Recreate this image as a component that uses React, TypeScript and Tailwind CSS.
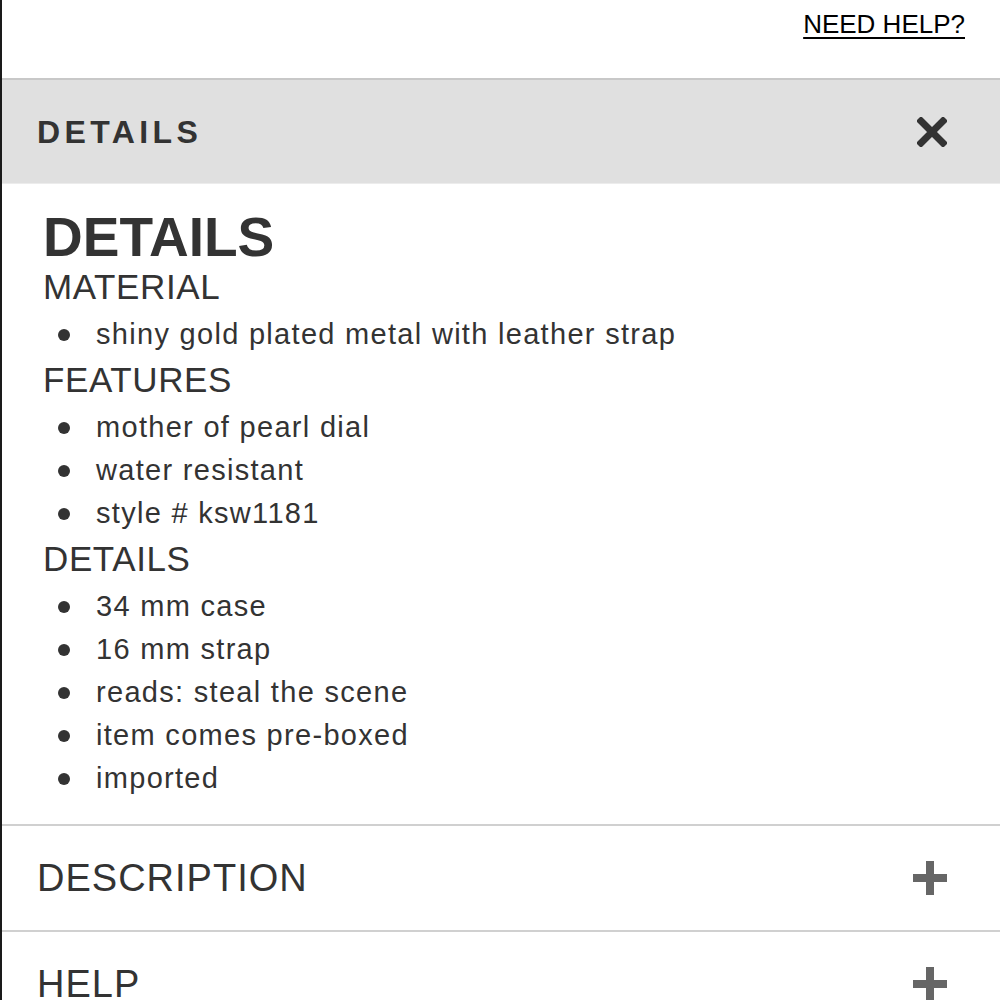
import React from 'react'

const sections = [
  { title: 'MATERIAL', items: ['shiny gold plated metal with leather strap'] },
  { title: 'FEATURES', items: ['mother of pearl dial', 'water resistant', 'style # ksw1181'] },
  {
    title: 'DETAILS',
    items: ['34 mm case', '16 mm strap', 'reads: steal the scene', 'item comes pre-boxed', 'imported']
  }
]

const CloseIcon = () => (
  <svg width="30" height="30" viewBox="0 0 30 30" className="block">
    <path d="M4 4 L26 26 M26 4 L4 26" stroke="#333" strokeWidth="7" strokeLinecap="square" />
  </svg>
)

const PlusIcon = () => (
  <svg width="36" height="36" viewBox="0 0 36 36" className="block">
    <path d="M18 1 V35 M1 18 H35" stroke="#666" strokeWidth="8" />
  </svg>
)

export default function App() {
  return (
    <div className="min-h-screen border-l-2 border-[#1a1a1a] bg-white text-[#333] font-['Liberation_Sans',Arial,sans-serif]">
      <div className="h-[78px] flex justify-end items-start pr-[35px] pt-[9px]">
        <a href="#" className="text-[26px] leading-[30px] text-black underline underline-offset-[4px] decoration-2">
          NEED HELP?
        </a>
      </div>

      <div className="h-[106px] border-t-2 border-[#c8c8c8] border-b border-b-[#ececec] bg-[#e0e0e0] flex items-center justify-between pl-[35px] pr-[53px]">
        <span className="text-[32px] font-bold tracking-[4.4px] leading-none">DETAILS</span>
        <CloseIcon />
      </div>

      <div className="px-[41px] pt-[27px] pb-[24px]">
        <h2 className="text-[55px] font-bold leading-[52px]">DETAILS</h2>
        {sections.map(section => (
          <div key={section.title}>
            <h3 className="text-[35px] leading-[44px] pt-[2px] pb-[4px] tracking-[0.6px]">{section.title}</h3>
            <ul>
              {section.items.map(item => (
                <li key={item} className="flex items-center h-[43px] text-[29px] tracking-[1.3px]">
                  <span className="w-[12px] h-[12px] rounded-full bg-[#333] ml-[15px] mr-[26px] shrink-0" />
                  {item}
                </li>
              ))}
            </ul>
          </div>
        ))}
      </div>

      {['DESCRIPTION', 'HELP'].map(label => (
        <div
          key={label}
          className="h-[106px] border-t-2 border-[#d0d0d0] flex items-center justify-between pl-[35px] pr-[52px]"
        >
          <span className="text-[38px] tracking-[1px] leading-none">{label}</span>
          <PlusIcon />
        </div>
      ))}
    </div>
  )
}
